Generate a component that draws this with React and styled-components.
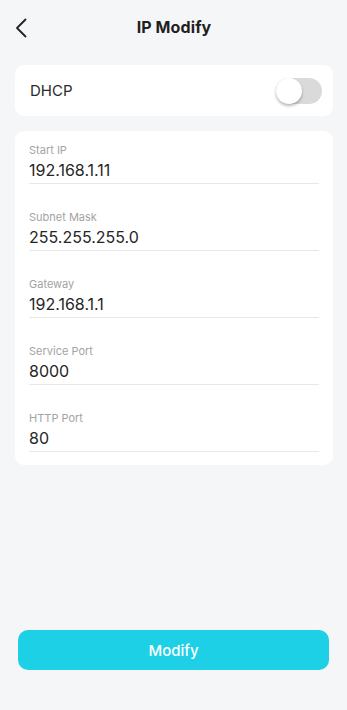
import React, { useState } from 'react';
import styled, { createGlobalStyle } from 'styled-components';

const GlobalStyle = createGlobalStyle`
  html, body {
    margin: 0;
    padding: 0;
    background: #f5f6f8;
  }
  body {
    font-family: Inter, "Noto Sans", "Liberation Sans", sans-serif;
    color: #222;
  }
`;

const Page = styled.div`
  min-height: 100vh;
  display: flex;
  flex-direction: column;
  box-sizing: border-box;
  padding: 0 14px 40px 15px;
`;

const Header = styled.div`
  height: 53px;
  display: flex;
  align-items: center;
  justify-content: center;
  position: relative;
`;

const BackButton = styled.button`
  position: absolute;
  left: 0;
  top: 16px;
  width: 24px;
  height: 24px;
  padding: 0;
  border: 0;
  background: none;
  display: flex;
  align-items: center;
  justify-content: flex-start;
`;

const Title = styled.h1`
  margin: 0;
  font-size: 16px;
  font-weight: 700;
  color: #1f1f1f;
  letter-spacing: 0.1px;
`;

const Card = styled.div`
  background: #fff;
  border-radius: 9px;
  margin-top: ${p => p.mt || 0}px;
`;

const SwitchRow = styled(Card)`
  height: 51px;
  display: flex;
  align-items: center;
  justify-content: space-between;
  padding: 0 11px 0 15px;
`;

const RowLabel = styled.span`
  font-size: 15px;
  color: #2b2b2b;
`;

const Track = styled.button`
  width: 46px;
  height: 26px;
  border-radius: 13px;
  border: 0;
  padding: 0;
  background: ${p => (p.on ? '#1dd0e5' : '#dadada')};
  position: relative;
  cursor: pointer;
`;

const Knob = styled.span`
  position: absolute;
  top: 0;
  left: ${p => (p.on ? '20px' : '0')};
  width: 26px;
  height: 26px;
  border-radius: 50%;
  background: #fff;
  box-shadow: 0 2px 3px rgba(0, 0, 0, 0.28);
`;

const FormCard = styled(Card)`
  padding: 12px 14px 13px;
  display: flex;
  flex-direction: column;
  gap: 26px;
`;

const Field = styled.div`
  display: flex;
  flex-direction: column;
`;

const FieldLabel = styled.label`
  font-size: 11px;
  line-height: 14px;
  color: #a3a3a3;
  margin-bottom: 3px;
`;

const FieldInput = styled.input`
  border: 0;
  outline: none;
  padding: 0 0 3px;
  font-family: inherit;
  font-size: 16px;
  line-height: 20px;
  height: 20px;
  color: #262626;
  background: transparent;
  border-bottom: 1px solid #e8e8e8;
  box-sizing: content-box;
`;

const Spacer = styled.div`
  flex: 1;
`;

const SubmitButton = styled.button`
  height: 40px;
  margin: 0 4px 0 3px;
  border: 0;
  border-radius: 10px;
  background: #1dd0e5;
  color: #fff;
  font-family: inherit;
  font-size: 15px;
  font-weight: 500;
  cursor: pointer;
`;

const fields = [
  { label: 'Start IP', value: '192.168.1.11' },
  { label: 'Subnet Mask', value: '255.255.255.0' },
  { label: 'Gateway', value: '192.168.1.1' },
  { label: 'Service Port', value: '8000' },
  { label: 'HTTP Port', value: '80' }
];

export default function App() {
  const [dhcp, setDhcp] = useState(false);
  const [values, setValues] = useState(fields.map(f => f.value));

  return (
    <>
      <GlobalStyle />
      <Page>
        <Header>
          <BackButton aria-label="back">
            <svg width="12" height="20" viewBox="0 0 12 20" fill="none">
              <path
                d="M10.5 1.5L2 10l8.5 8.5"
                stroke="#222"
                strokeWidth="1.8"
                strokeLinecap="round"
                strokeLinejoin="round"
              />
            </svg>
          </BackButton>
          <Title>IP Modify</Title>
        </Header>

        <SwitchRow mt={12}>
          <RowLabel>DHCP</RowLabel>
          <Track on={dhcp ? 1 : 0} onClick={() => setDhcp(!dhcp)}>
            <Knob on={dhcp ? 1 : 0} />
          </Track>
        </SwitchRow>

        <FormCard mt={15}>
          {fields.map((f, i) => (
            <Field key={f.label}>
              <FieldLabel>{f.label}</FieldLabel>
              <FieldInput
                value={values[i]}
                onChange={e => {
                  const next = values.slice();
                  next[i] = e.target.value;
                  setValues(next);
                }}
              />
            </Field>
          ))}
        </FormCard>

        <Spacer />
        <SubmitButton>Modify</SubmitButton>
      </Page>
    </>
  );
}
